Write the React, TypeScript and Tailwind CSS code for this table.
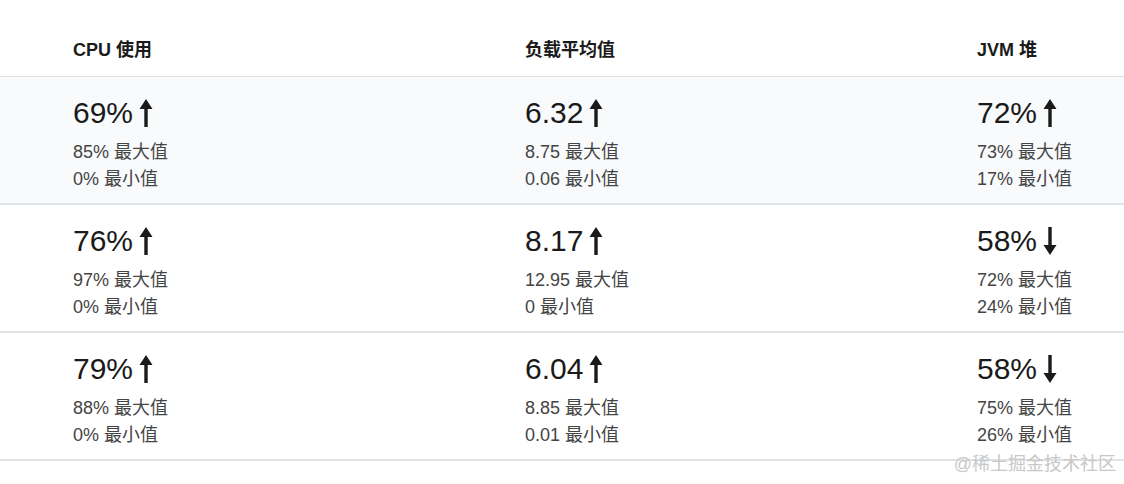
import React from 'react';

type Cell = { value: string; up: boolean; max: string; min: string };

const rows: Cell[][] = [
  [
    { value: '69%', up: true, max: '85%', min: '0%' },
    { value: '6.32', up: true, max: '8.75', min: '0.06' },
    { value: '72%', up: true, max: '73%', min: '17%' },
  ],
  [
    { value: '76%', up: true, max: '97%', min: '0%' },
    { value: '8.17', up: true, max: '12.95', min: '0' },
    { value: '58%', up: false, max: '72%', min: '24%' },
  ],
  [
    { value: '79%', up: true, max: '88%', min: '0%' },
    { value: '6.04', up: true, max: '8.85', min: '0.01' },
    { value: '58%', up: false, max: '75%', min: '26%' },
  ],
];

const Arrow = ({ up }: { up: boolean }) => (
  <svg width="14" height="30" viewBox="0 0 14 30" className={up ? '' : 'rotate-180'}>
    <path d="M7 1 L13.5 11 L8.7 11 L8.7 29 L5.3 29 L5.3 11 L0.5 11 Z" fill="#1a1a1a" />
  </svg>
);

const headers = ['CPU 使用', '负载平均值', 'JVM 堆'];

export default function App() {
  return (
    <div
      className="w-[1124px] h-[484px] bg-white text-[#1f1f1f] relative overflow-hidden"
      style={{ fontFamily: '"Liberation Sans", "Noto Sans CJK SC", sans-serif' }}
    >
      <div className="grid grid-cols-[452px_452px_1fr] h-[77px] border-b border-[#dde1e6] pl-[73px] items-center pt-[24px]">
        {headers.map((h) => (
          <div key={h} className="text-[18px] font-semibold text-[#1b1b1b]">
            {h}
          </div>
        ))}
      </div>
      {rows.map((row, i) => (
        <div
          key={i}
          className={`grid grid-cols-[452px_452px_1fr] h-[128px] pl-[73px] pt-[18px] border-b-2 border-[#dfe2e6] ${
            i === 0 ? 'bg-[#f8fafc]' : ''
          }`}
        >
          {row.map((c, j) => (
            <div key={j} className="flex flex-col">
              <div className="flex items-center gap-[6px] h-[36px]">
                <span className="text-[30px] leading-none text-[#1a1a1a]">{c.value}</span>
                <Arrow up={c.up} />
              </div>
              <div className="text-[18px] leading-[27px] text-[#444] mt-[8px]">{c.max} 最大值</div>
              <div className="text-[18px] leading-[27px] text-[#444]">{c.min} 最小值</div>
            </div>
          ))}
        </div>
      ))}
      <div className="absolute right-[8px] bottom-[6px] text-[18px] text-[#c8c8c8]">@稀土掘金技术社区</div>
    </div>
  );
}
